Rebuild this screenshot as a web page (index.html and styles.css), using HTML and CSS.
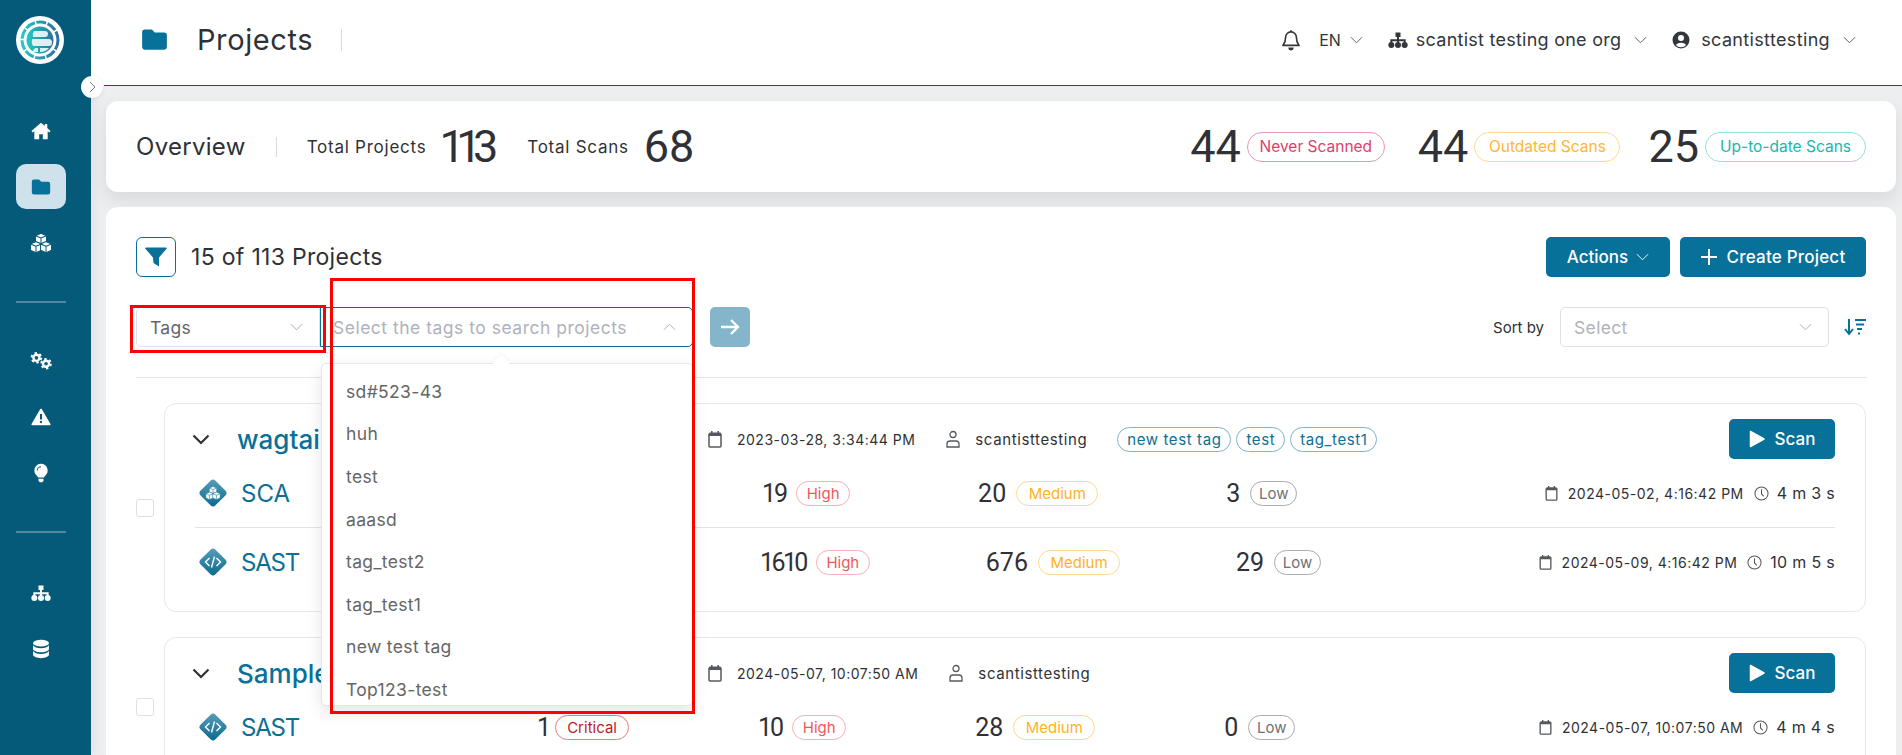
FILE: index.html
```html
<!DOCTYPE html>
<html lang="en">
<head>
<meta charset="utf-8">
<title>Projects</title>
<link rel="stylesheet" href="styles.css">
</head>
<body>
<svg class="defs" width="0" height="0" aria-hidden="true">
  <defs>
    <linearGradient id="dia" x1="0" y1="0" x2="1" y2="1"><stop offset="0" stop-color="#5b9fb9"/><stop offset="1" stop-color="#07688f"/></linearGradient>
    <linearGradient id="logoG" x1="0" y1="0" x2="1" y2="0"><stop offset="0" stop-color="#23c9c4"/><stop offset="1" stop-color="#2f6f9c"/></linearGradient>
    <symbol id="i-folder" viewBox="0 0 24 24"><path d="M1 5.5A2.5 2.5 0 0 1 3.500 3h6.200l2.600 2.800h8.200A2.500 2.500 0 0 1 23 8.300V18.500A2.500 2.500 0 0 1 20.500 21h-17A2.500 2.500 0 0 1 1 18.500z" fill="currentColor"/></symbol>
    <symbol id="i-chev" viewBox="0 0 14 8"><path d="M1 1l6 6 6-6" fill="none" stroke="currentColor" stroke-width="1"/></symbol>
    <symbol id="i-cal" viewBox="0 0 14 18"><path d="M1 4.500h12V16a1 1 0 0 1-1 1H2a1 1 0 0 1-1-1z" fill="none" stroke="currentColor" stroke-width="1.500"/><path d="M1 3.500a1 1 0 0 1 1-1h10a1 1 0 0 1 1 1V6H1z" fill="currentColor"/><path d="M3.800 1v2.500M10.200 1v2.500" stroke="currentColor" stroke-width="1.500"/></symbol>
    <symbol id="i-user" viewBox="0 0 16 18"><circle cx="8" cy="4.500" r="3" fill="none" stroke="currentColor" stroke-width="1.300"/><path d="M2 17v-3a3 3 0 0 1 3-3h6a3 3 0 0 1 3 3v3z" fill="none" stroke="currentColor" stroke-width="1.300"/></symbol>
    <symbol id="i-clock" viewBox="0 0 16 16"><circle cx="8" cy="8" r="7" fill="none" stroke="currentColor" stroke-width="1.100"/><path d="M8 3.500V8.500L10.500 11" fill="none" stroke="currentColor" stroke-width="1.100"/></symbol>
    <symbol id="i-play" viewBox="0 0 16 18"><path d="M1.500 1.500L15 9 1.500 16.500z" fill="currentColor" stroke="currentColor" stroke-width="1.500" stroke-linejoin="round"/></symbol>
    <symbol id="i-sitemap" viewBox="0 0 24 20"><path d="M9 1h6v5.500H9zM10.800 6h2.400v3h8v4h-2.400v-1.600h-5.600V13h-2.400v-1.600H5.200V13H2.800V9h8z" fill="currentColor"/><circle cx="4" cy="16" r="3.600" fill="currentColor"/><circle cx="12" cy="16" r="3.600" fill="currentColor"/><circle cx="20" cy="16" r="3.600" fill="currentColor"/></symbol>
    <symbol id="i-cubes" viewBox="0 0 24 22">
      <g fill="currentColor" stroke="var(--cube-line,#055a7a)" stroke-width="1.100" stroke-linejoin="round">
        <path d="M12 .5l6 2.500v6.300L12 11.800 6 9.300V3z"/><path d="M6.500 9.500L12.500 12v7L6.500 21.500.5 19v-7z"/><path d="M17.500 9.500l6 2.500v7l-6 2.500-6-2.500v-7z"/>
        <path d="M6 3l6 2.500L18 3M12 5.500v6.300M.5 12l6 2.500 6-2.500M6.500 14.500v7M11.500 12l6 2.500 6-2.500M17.500 14.500v7" fill="none"/>
      </g>
    </symbol>
    <symbol id="i-diamond" viewBox="0 0 30 30"><rect x="4.500" y="4.500" width="21" height="21" rx="3.500" transform="rotate(45 15 15)" fill="url(#dia)"/></symbol>
  </defs>
</svg>

<div class="app">
  <aside class="sidebar">
    <div class="logo">
      <svg viewBox="0 0 48 48" width="48" height="48"><circle cx="24" cy="24" r="24" fill="#fff"/><circle cx="24" cy="24" r="18" fill="none" stroke="url(#logoG)" stroke-width="3" stroke-dasharray="10 1.500"/><circle cx="24" cy="24" r="13.500" fill="url(#logoG)"/><path d="M18 15h11q3 0 3 3t-3 3H17q-1-3 1-6zM16 23h17q3 0 3 3.500T33 30H17q-2-3-1-7zM19 32h3v4h-6zM24 32h9q-3 4-9 4z" fill="#fff" fill-opacity=".85"/></svg>
    </div>
    <nav class="nav">
      <a class="nav-item"><svg class="nav-ic" viewBox="0 0 24 22"><path d="M12 1L.5 11l1.600 1.800L4 11.200V21h5.800v-6.200h4.400V21H20v-9.800l1.900 1.600L23.500 11 19.500 7.500V2.500h-3v2.400z" fill="currentColor"/></svg></a>
      <a class="nav-item active"><svg class="nav-ic" viewBox="0 0 24 24"><use href="#i-folder"/></svg></a>
      <a class="nav-item"><svg class="nav-ic wide" viewBox="0 0 24 22"><use href="#i-cubes"/></svg></a>
      <div class="nav-sep"></div>
      <a class="nav-item"><svg class="nav-ic wide" viewBox="0 0 24 20"><g fill="none" stroke="currentColor"><circle cx="7" cy="6.500" r="3.300" stroke-width="2.600"/><circle cx="7" cy="6.500" r="5.200" stroke-width="2.200" stroke-dasharray="2.600 2.850"/><circle cx="17.500" cy="13" r="3.300" stroke-width="2.600"/><circle cx="17.500" cy="13" r="5.200" stroke-width="2.200" stroke-dasharray="2.600 2.850"/></g></svg></a>
      <a class="nav-item"><svg class="nav-ic" viewBox="0 0 24 22"><path d="M12 2L22.500 20H1.500z" fill="currentColor" stroke="currentColor" stroke-width="2" stroke-linejoin="round"/><path d="M12 7.500v6.500" stroke="#055a7a" stroke-width="2.400"/><circle cx="12" cy="17" r="1.400" fill="#055a7a"/></svg></a>
      <a class="nav-item"><svg class="nav-ic" viewBox="0 0 24 24"><path d="M12 1a8 8 0 0 0-5 14.200c.8.700 1.300 1.500 1.500 2.300h7c.2-.8.700-1.600 1.500-2.300A8 8 0 0 0 12 1z" fill="currentColor"/><path d="M9 19h6v2.300L13.500 23h-3L9 21.300z" fill="currentColor"/><path d="M7.500 9a4.500 4.500 0 0 1 4.500-4.500" fill="none" stroke="#055a7a" stroke-width="1.300"/></svg></a>
      <div class="nav-sep sep2"></div>
      <a class="nav-item"><svg class="nav-ic" viewBox="0 0 24 20"><use href="#i-sitemap"/></svg></a>
      <a class="nav-item"><svg class="nav-ic" viewBox="0 0 24 24"><g fill="currentColor"><ellipse cx="12" cy="5" rx="9.500" ry="4"/><path d="M2.500 7.500c1.500 2.500 5 3.500 9.500 3.500s8-1 9.500-3.500V12c0 2.200-4.300 4-9.500 4s-9.500-1.800-9.500-4z"/><path d="M2.500 14.500c1.500 2.500 5 3.500 9.500 3.500s8-1 9.500-3.500V19c0 2.200-4.300 4-9.500 4s-9.500-1.800-9.500-4z"/></g></svg></a>
    </nav>
  </aside>
  <button class="collapse" aria-label="Expand"><svg width="7" height="12" viewBox="0 0 7 12"><path d="M1 1l5 5-5 5" fill="none" stroke="#777" stroke-width="1"/></svg></button>

  <main class="main">
    <header class="topbar">
      <svg class="top-folder"><use href="#i-folder"/></svg>
      <h1 class="page-title">Projects</h1>
      <span class="top-sep"></span>
      <div class="top-right">
        <svg class="bell" viewBox="0 0 20 24"><path d="M10 3a6 6 0 0 0-6 6c0 6-2 7.500-3 9h18c-1-1.500-3-3-3-9a6 6 0 0 0-6-6z" fill="none" stroke="currentColor" stroke-width="1.800" stroke-linejoin="round"/><path d="M10 .800v2.400M7.800 21a2.200 2 0 0 0 4.400 0z" fill="currentColor" stroke="currentColor" stroke-width="1.400"/></svg>
        <span class="top-txt lang">EN</span>
        <svg class="chev top-chev"><use href="#i-chev"/></svg>
        <svg class="top-ic org"><use href="#i-sitemap"/></svg>
        <span class="top-txt org-name">scantist testing one org</span>
        <svg class="chev top-chev"><use href="#i-chev"/></svg>
        <svg class="top-ic acct" viewBox="0 0 18 18"><circle cx="9" cy="9" r="8.500" fill="currentColor"/><circle cx="9" cy="7" r="3" fill="#fff"/><path d="M3.800 14a6 4.500 0 0 1 10.400 0 7 7 0 0 1-10.400 0z" fill="#fff"/></svg>
        <span class="top-txt acct-name">scantisttesting</span>
        <svg class="chev top-chev"><use href="#i-chev"/></svg>
      </div>
    </header>

    <div class="content">
      <section class="overview">
        <h2 class="ov-title">Overview</h2>
        <span class="ov-sep"></span>
        <span class="ov-label">Total Projects</span><span class="big big-a">113</span>
        <span class="ov-label">Total Scans</span><span class="big big-b">68</span>
        <div class="ov-right">
          <span class="big">44</span><span class="ov-badge never">Never Scanned</span>
          <span class="big">44</span><span class="ov-badge outdated">Outdated Scans</span>
          <span class="big">25</span><span class="ov-badge uptodate">Up-to-date Scans</span>
        </div>
      </section>

      <section class="panel">
        <div class="panel-head">
          <button class="filter-btn" aria-label="Filter"><svg width="24" height="22" viewBox="0 0 24 22"><path d="M2 1.500h20a.8.800 0 0 1 .6 1.300L15 11.500V20.500l-5.500-3.500-.5-5.500L1.400 2.800A.8.800 0 0 1 2 1.500z" fill="currentColor"/></svg></button>
          <span class="count">15 of 113 Projects</span>
          <div class="head-btns">
            <button class="btn actions">Actions <svg class="chev btn-chev"><use href="#i-chev"/></svg></button>
            <button class="btn create"><svg class="plus" viewBox="0 0 16 16"><path d="M8 0v16M0 8h16" stroke="currentColor" stroke-width="2"/></svg>Create Project</button>
          </div>
        </div>

        <div class="filters">
          <div class="select tags-select">
            <span class="sel-val">Tags</span><svg class="chev sel-chev"><use href="#i-chev"/></svg>
            <div class="annot annot-tags"></div>
          </div>
          <div class="tag-wrap">
            <div class="select tag-input">
              <span class="sel-ph wide-ph">Select the tags to search projects</span><svg class="chev sel-chev up"><use href="#i-chev"/></svg>
            </div>
            <div class="dropdown">
              <span class="caret"></span>
              <ul class="dd-list">
                <li>sd#523-43</li><li>huh</li><li>test</li><li>aaasd</li><li>tag_test2</li><li>tag_test1</li><li>new test tag</li><li>Top123-test</li>
              </ul>
            </div>
            <div class="annot annot-input"></div>
          </div>
          <button class="go" aria-label="Search"><svg width="20" height="18" viewBox="0 0 20 18"><path d="M1 9h17M11 2l7 7-7 7" fill="none" stroke="#fff" stroke-width="2.400"/></svg></button>
          <div class="sort">
            <span class="sort-label">Sort by</span>
            <div class="select sort-select"><span class="sel-ph">Select</span><svg class="chev sel-chev"><use href="#i-chev"/></svg></div>
            <svg class="sort-ic" viewBox="0 0 22 18"><path d="M5 1v14M1 11l4 5 4-5" fill="none" stroke="currentColor" stroke-width="2"/><path d="M11 2h11M12 6.500h8M13 11h5M14 15.500h2" stroke="currentColor" stroke-width="2"/></svg>
          </div>
        </div>

        <hr class="rule">

        <div class="project">
          <span class="check"></span>
          <div class="pcard">
            <div class="phead">
              <div class="pname"><svg class="pchev" viewBox="0 0 18 11"><path d="M1.500 1.500L9 9l7.500-7.500" fill="none" stroke="currentColor" stroke-width="2.200"/></svg><span class="pname-txt">wagtail</span></div>
              <svg class="mi cal"><use href="#i-cal"/></svg><span class="meta">2023-03-28, 3:34:44 PM</span>
              <svg class="mi usr"><use href="#i-user"/></svg><span class="meta owner">scantisttesting</span>
              <div class="ptags"><span class="ptag">new test tag</span><span class="ptag">test</span><span class="ptag">tag_test1</span></div>
              <button class="btn scan"><svg class="play"><use href="#i-play"/></svg>Scan</button>
            </div>
            <div class="row row-a">
              <div class="row-name"><svg class="dia" viewBox="0 0 30 30"><use href="#i-diamond"/><svg x="7.500" y="8" width="15" height="14" viewBox="0 0 24 22" class="dia-cubes"><use href="#i-cubes"/></svg></svg><span class="kind">SCA</span></div>
              <div class="metrics">
                <span class="metric"><b class="num tight">19</b><span class="sev high">High</span></span>
                <span class="metric"><b class="num">20</b><span class="sev medium">Medium</span></span>
                <span class="metric"><b class="num">3</b><span class="sev low">Low</span></span>
              </div>
              <div class="when"><svg class="mi cal"><use href="#i-cal"/></svg><span class="meta">2024-05-02, 4:16:42 PM</span><svg class="mi clk"><use href="#i-clock"/></svg><span class="dur">4 m 3 s</span></div>
            </div>
            <div class="row row-b">
              <div class="row-name"><svg class="dia" viewBox="0 0 30 30"><use href="#i-diamond"/><path d="M11.500 11l-4 4 4 4M18.500 11l4 4-4 4M16.500 9.500l-3 11" fill="none" stroke="#fff" stroke-width="1.400"/></svg><span class="kind sast">SAST</span></div>
              <div class="metrics">
                <span class="metric"><b class="num tighter">1610</b><span class="sev high">High</span></span>
                <span class="metric"><b class="num">676</b><span class="sev medium">Medium</span></span>
                <span class="metric"><b class="num">29</b><span class="sev low">Low</span></span>
              </div>
              <div class="when"><svg class="mi cal"><use href="#i-cal"/></svg><span class="meta">2024-05-09, 4:16:42 PM</span><svg class="mi clk"><use href="#i-clock"/></svg><span class="dur">10 m 5 s</span></div>
            </div>
          </div>
        </div>

        <div class="project">
          <span class="check"></span>
          <div class="pcard">
            <div class="phead">
              <div class="pname"><svg class="pchev" viewBox="0 0 18 11"><path d="M1.500 1.500L9 9l7.500-7.500" fill="none" stroke="currentColor" stroke-width="2.200"/></svg><span class="pname-txt">Sample</span></div>
              <svg class="mi cal"><use href="#i-cal"/></svg><span class="meta">2024-05-07, 10:07:50 AM</span>
              <svg class="mi usr"><use href="#i-user"/></svg><span class="meta owner">scantisttesting</span>
              <button class="btn scan"><svg class="play"><use href="#i-play"/></svg>Scan</button>
            </div>
            <div class="row row-c">
              <div class="row-name"><svg class="dia" viewBox="0 0 30 30"><use href="#i-diamond"/><path d="M11.500 11l-4 4 4 4M18.500 11l4 4-4 4M16.500 9.500l-3 11" fill="none" stroke="#fff" stroke-width="1.400"/></svg><span class="kind sast">SAST</span></div>
              <div class="metrics">
                <span class="metric"><b class="num one">1</b><span class="sev critical">Critical</span></span>
                <span class="metric"><b class="num tight">10</b><span class="sev high">High</span></span>
                <span class="metric"><b class="num">28</b><span class="sev medium">Medium</span></span>
                <span class="metric"><b class="num">0</b><span class="sev low">Low</span></span>
              </div>
              <div class="when"><svg class="mi cal"><use href="#i-cal"/></svg><span class="meta">2024-05-07, 10:07:50 AM</span><svg class="mi clk"><use href="#i-clock"/></svg><span class="dur">4 m 4 s</span></div>
            </div>
          </div>
        </div>
      </section>
    </div>
  </main>
</div>
</body>
</html>
```

FILE: styles.css
```css
* { box-sizing: border-box; }
html, body { margin: 0; height: 100%; overflow: hidden; }
body { font-family: Inter, "Open Sans", sans-serif; color: #2f3136; background: #eceef0; }
.defs { position: absolute; }
button { font: inherit; border: 0; cursor: pointer; }
h1, h2 { margin: 0; font-weight: 400; }
svg { display: block; flex: none; }

.app { display: flex; height: 755px; position: relative; }

.sidebar { width: 91px; flex: none; background: #055a7a; color: #fff; padding: 16px 25px 0 16px; box-shadow: 3px 0 10px rgba(0,0,0,.05); }
.logo { height: 48px; margin-bottom: 44px; }
.nav { display: flex; flex-direction: column; align-items: center; }
.nav-item { width: 50px; height: 45px; margin-bottom: 11px; border-radius: 10px; display: flex; align-items: center; justify-content: center; }
.nav-item.active { background: #cfe1ea; color: #087199; }
.nav-ic { width: 20px; height: 20px; }
.nav-ic.wide { width: 22px; height: 22px; }
.nav-sep { width: 50px; height: 2px; background: rgba(255,255,255,.3); margin: 25px 0 35px; flex: none; }
.sep2 { margin: 25px 0 37px; }
.collapse { position: absolute; left: 81px; top: 76px; width: 22px; height: 22px; border-radius: 50%; background: #fff; display: flex; align-items: center; justify-content: center; padding: 0; z-index: 3; box-shadow: 0 1px 4px rgba(0,0,0,.08); }

.main { flex: 1; min-width: 0; display: flex; flex-direction: column; }
.topbar { height: 86px; flex: none; margin-left: 13px; padding: 0 46px 6px 37px; background: #fff; border-bottom: 1px solid #055a7a; display: flex; align-items: center; box-shadow: -13px 0 0 #fff; }
.top-folder { width: 27px; height: 27px; color: #087199; }
.page-title { font-size: 29px; margin-left: 29px; color: #2f3136; letter-spacing: .6px; }
.top-sep { width: 1px; height: 22px; background: #d9dbe0; margin-left: 28px; }
.top-right { margin-left: auto; display: flex; align-items: center; color: #33363b; }
.bell { width: 18px; height: 22px; }
.top-txt { font-size: 18px; letter-spacing: .25px; white-space: nowrap; }
.acct-name { letter-spacing: .35px; }
.lang { font-size: 16px; margin-left: 19px; letter-spacing: 0; }
.chev { width: 13px; height: 8px; color: #555; }
.top-chev { margin-left: 9px; }
.top-ic { width: 20px; height: 18px; }
.org { margin-left: 25px; }
.org-name { margin-left: 8px; }
.org-name + .top-chev { margin-left: 13px; }
.acct { margin-left: 25px; width: 18px; }
.acct-name { margin-left: 11px; }
.acct-name + .top-chev { margin-left: 13px; }

.content { flex: 1; min-height: 0; padding: 15px 6px 0 15px; display: flex; flex-direction: column; gap: 15px; }
.overview { height: 91px; flex: none; background: #fff; border-radius: 12px; padding: 0 30px; display: flex; align-items: center; box-shadow: 0 8px 18px rgba(0,0,0,.09); }
.ov-title { font-size: 24px; letter-spacing: .3px; }
.ov-sep { width: 1px; height: 20px; background: #d9dbe0; margin: 0 30px 0 30px; }
.ov-label { font-size: 17px; letter-spacing: .75px; white-space: nowrap; }
.big { font-family: Roboto, sans-serif; font-size: 45px; font-weight: 400; color: #2f3136; line-height: 1; }
.big-a { margin: 0 37.500px 0 13px; letter-spacing: -8.500px; }
.big-b { margin-left: 15px; }
.ov-right { margin-left: auto; display: flex; align-items: center; }
.ov-badge { height: 30px; border-radius: 15px; border: 1px solid; margin-left: 6px; font-size: 15.500px; display: flex; align-items: center; justify-content: center; white-space: nowrap; }
.never { width: 138px; color: #d9436b; border-color: #ee97ae; margin-right: 33px; }
.outdated { width: 146px; color: #ffb638; border-color: #ffd98e; margin-right: 28px; }
.uptodate { width: 161px; color: #21b6ad; border-color: #93e0dc; }

.panel { flex: 1; min-height: 0; background: #fff; border-radius: 12px 12px 0 0; padding: 30px 30px 0; }
.panel-head { display: flex; align-items: center; height: 40px; }
.filter-btn { width: 40px; height: 40px; background: #fff; border: 1px solid #087199; border-radius: 6px; color: #087199; display: flex; align-items: center; justify-content: center; padding: 0; }
.count { font-size: 23px; letter-spacing: .3px; margin-left: 15px; }
.head-btns { margin-left: auto; display: flex; gap: 10px; }
.btn { background: #087199; color: #fff; border-radius: 5px; height: 40px; font-size: 17px; font-weight: 500; display: flex; align-items: center; justify-content: center; padding: 0; }
.actions { width: 124px; gap: 8px; }
.btn-chev { color: #fff; }
.create { width: 186px; letter-spacing: .2px; }
.plus { width: 16px; height: 16px; margin-right: 10px; }

.filters { display: flex; align-items: center; margin-top: 30px; height: 40px; }
.select { height: 40px; border: 1px solid #dfe1e8; border-radius: 5px; display: flex; align-items: center; justify-content: space-between; padding: 0 16px 0 13px; font-size: 17.500px; letter-spacing: .35px; background: #fff; position: relative; }
.tags-select { width: 184px; border-radius: 5px 0 0 5px; }
.sel-val { color: #666; }
.sel-ph { color: #afb2bb; white-space: nowrap; }
.wide-ph { letter-spacing: .5px; }
.sel-chev { color: #a7a9b0; }
.up { transform: rotate(180deg); }
.tag-wrap { position: relative; width: 373px; }
.tag-input { width: 373px; border-color: #087199; border-radius: 0 5px 5px 0; padding-left: 12px; }
.dropdown { position: absolute; left: 1px; top: 56px; width: 372px; height: 343px; background: #fff; border: 1px solid #e4e6ea; border-radius: 5px; box-shadow: 0 6px 16px rgba(0,0,0,.1); z-index: 4; }
.caret { position: absolute; left: 173px; top: -7px; width: 12px; height: 12px; background: #fff; transform: rotate(45deg); box-shadow: -2px -2px 3px rgba(0,0,0,.03); }
.dd-list { list-style: none; margin: 0; padding: 6px 0 0 24px; }
.dd-list li { height: 42.600px; display: flex; align-items: center; color: #666; font-size: 17.500px; letter-spacing: .35px; }
.annot { position: absolute; border: 3px solid #f00; pointer-events: none; z-index: 5; }
.annot-tags { left: -7px; top: -3px; width: 196px; height: 48px; }
.annot-input { left: 10px; top: -29px; width: 365px; height: 436px; }
.go { width: 40px; height: 40px; margin-left: 17px; background: #84b5ca; border-radius: 5px; display: flex; align-items: center; justify-content: center; padding: 0; }
.sort { margin-left: auto; display: flex; align-items: center; }
.sort-label { font-size: 15px; }
.sort-select { width: 269px; margin-left: 16px; }
.sort-ic { width: 22px; height: 18px; margin-left: 15px; color: #087199; }

.rule { border: 0; border-top: 1px solid #e1e3e8; margin: 30px 0 25px; }
.project { display: flex; align-items: center; gap: 10px; margin-bottom: 25px; }
.check { width: 18px; height: 18px; flex: none; border: 1px solid #dfe1e6; border-radius: 3px; }
.pcard { flex: 1; min-width: 0; border: 1px solid #e6e8ec; border-radius: 12px; padding: 15px 30px; }
.phead { display: flex; align-items: center; height: 40px; }
.pname { width: 513px; flex: none; display: flex; align-items: center; }
.pchev { width: 18px; height: 11px; margin-left: -3px; color: #2f3136; }
.pname-txt { font-size: 26px; font-weight: 500; color: #087199; margin-left: 27px; }
.mi { color: #55585e; }
.cal { width: 14px; height: 18px; }
.usr { width: 16px; height: 18px; margin-left: 30px; }
.clk { width: 15px; height: 15px; margin-left: 10px; }
.meta { font-size: 14px; letter-spacing: .5px; margin-left: 15px; white-space: nowrap; }
.owner { font-size: 15px; letter-spacing: .6px; margin-left: 14px; }
.dur { font-size: 16px; letter-spacing: .3px; margin-left: 8px; white-space: nowrap; }
.ptags { display: flex; gap: 5px; margin-left: 30px; }
.ptag { height: 25px; border: 1px solid #7fb3c8; border-radius: 13px; padding: 0 9px; font-size: 15px; letter-spacing: .6px; color: #0b6f96; display: flex; align-items: center; white-space: nowrap; }
.scan { width: 106px; margin-left: auto; gap: 10px; }
.play { width: 16px; height: 18px; }

.row { display: flex; align-items: center; height: 68px; }
.row-a { border-bottom: 1px solid #e1e3e8; height: 69px; }
.row-name { flex: none; display: flex; align-items: center; }
.dia { width: 30px; height: 30px; margin-left: 3px; }
.dia-cubes { color: #fff; --cube-line: #3a87a6; }
.kind { font-size: 24px; color: #0b6f96; margin-left: 13px; }
.sast { letter-spacing: -1.200px; }
.metrics { display: flex; align-items: center; }
.row-a .row-name { width: 567px; }
.row-a .metrics { gap: 128px; }
.row-b .row-name { width: 565px; }
.row-b .metrics { gap: 116px; }
.row-c .row-name { width: 342px; }
.row-c .metrics { gap: 129px; }
.metric { display: flex; align-items: center; gap: 10px; }
.num { font-family: Roboto, sans-serif; font-size: 25px; font-weight: 400; color: #2f3136; }
.tight { letter-spacing: -2px; }
.tighter { letter-spacing: -2.600px; }
.one { letter-spacing: -6px; }
.sev { height: 25px; border: 1px solid; border-radius: 13px; font-size: 15px; display: flex; align-items: center; justify-content: center; }
.high { width: 54px; color: #f0575b; border-color: #f7b1b3; }
.medium { width: 82px; color: #ffb21e; border-color: #ffd88c; }
.low { width: 47px; color: #6f7176; border-color: #a9abaf; }
.critical { width: 74px; color: #c01c24; border-color: #e58085; }
.when { margin-left: auto; display: flex; align-items: center; }
.when .cal { width: 13px; height: 16px; }
.when .meta { margin-left: 10px; }
```
